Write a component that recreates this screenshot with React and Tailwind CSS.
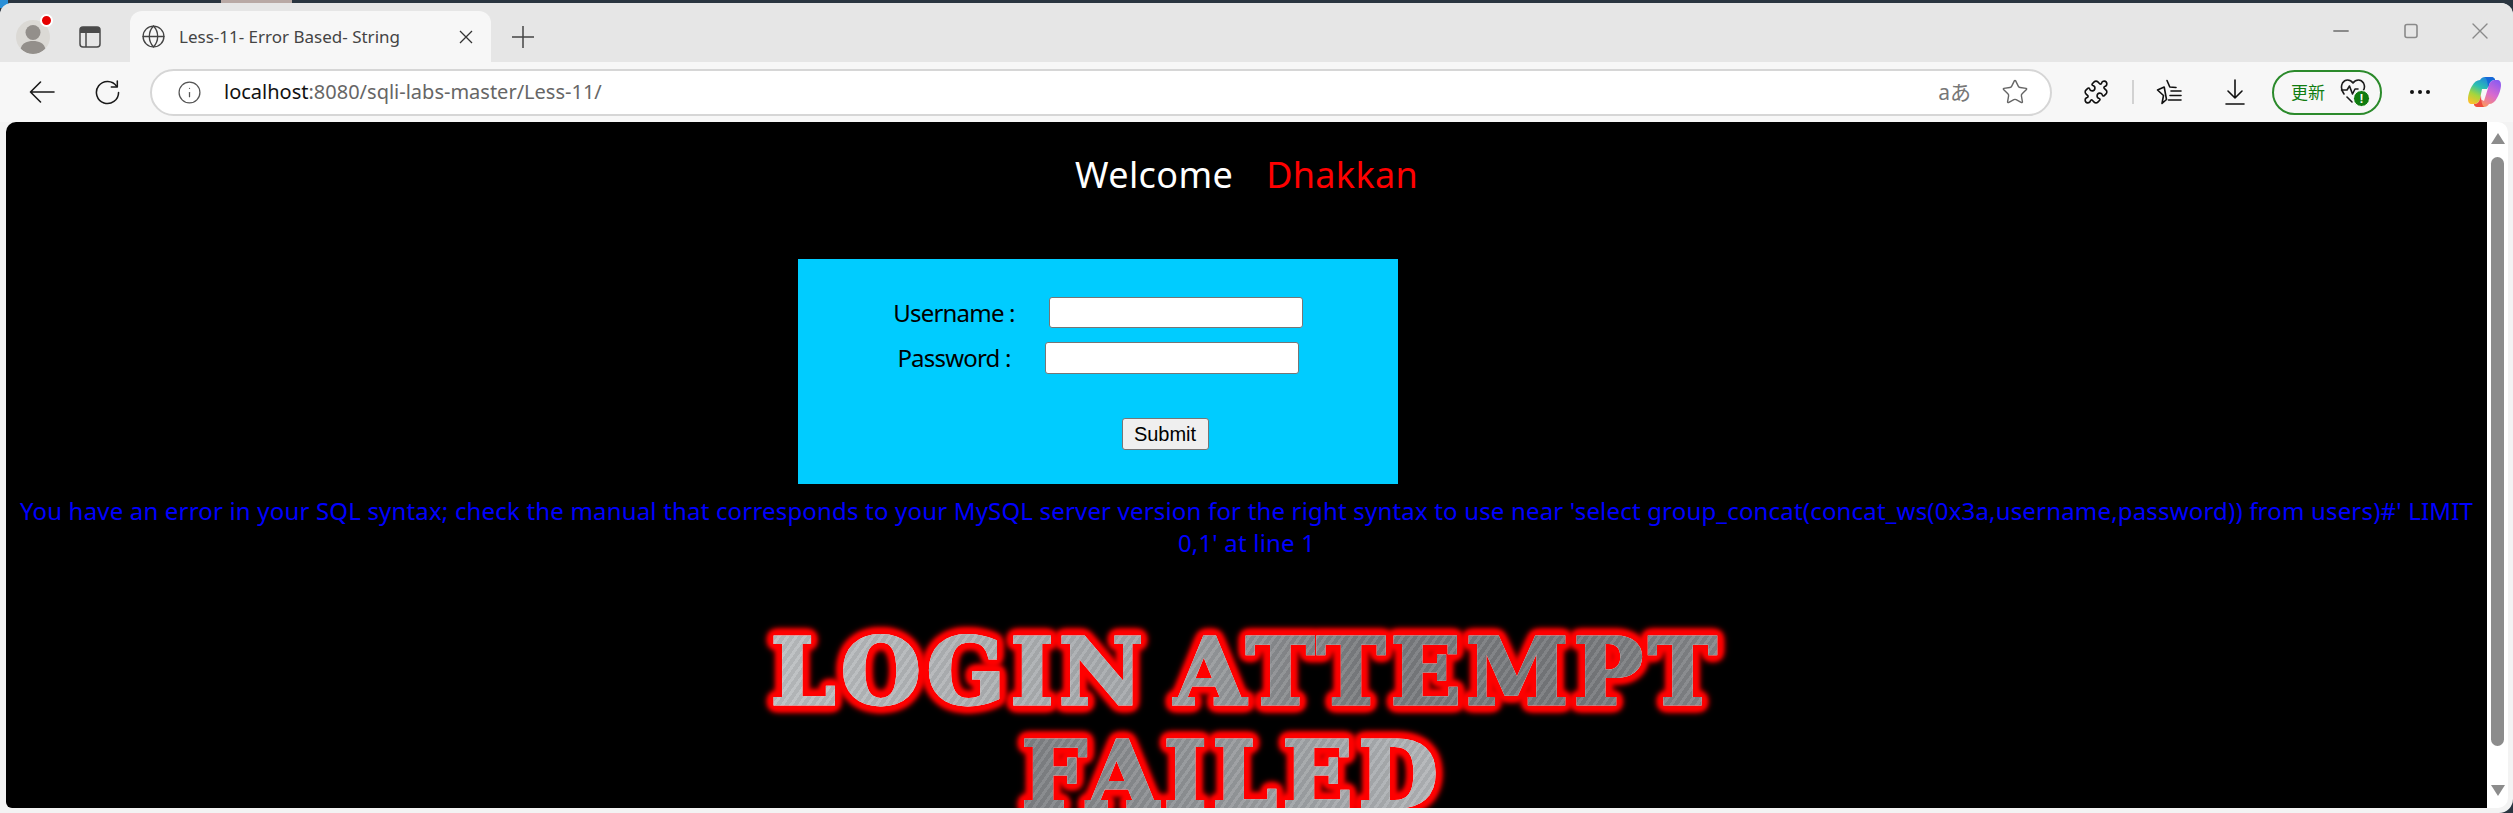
import React from "react";
import { Globe, Star, Info, Puzzle } from "lucide-react";

const ui = "font-['Noto_Sans','Open_Sans','Noto_Sans_CJK_SC',sans-serif]";

function Avatar() {
  return (
    <div className="relative w-[34px] h-[34px]">
      <div className="w-[34px] h-[34px] rounded-full bg-[#dbd9d5] overflow-hidden">
        <svg viewBox="0 0 34 34" className="w-[34px] h-[34px]">
          <circle cx="17" cy="12.5" r="7.5" fill="#938f8b" />
          <path d="M4.5 29 C6 23 11 21 17 21 C23 21 28 23 29.5 29 C26 32 22 34 17 34 C12 34 8 32 4.5 29Z" fill="#938f8b" />
        </svg>
      </div>
      <div className="absolute left-[24px] top-[-6px] w-[13px] h-[13px] rounded-full bg-[#e60000] border-2 border-white" />
    </div>
  );
}

function Sidebar() {
  return (
    <svg viewBox="0 0 22 22" className="w-[22px] h-[22px]" fill="none">
      <rect x="1" y="1" width="20" height="20" rx="3" stroke="#4a4a4a" strokeWidth="1.5" />
      <path d="M1 5 a4 4 0 0 1 4 -4 h12 a4 4 0 0 1 4 4 v2 h-20z" fill="#4a4a4a" />
      <path d="M7 7 v14" stroke="#4a4a4a" strokeWidth="1.5" />
    </svg>
  );
}

function Back() {
  return (
    <svg viewBox="0 0 26 22" className="w-[26px] h-[22px]" fill="none" stroke="#1a1a1a" strokeWidth="1.6" strokeLinecap="round" strokeLinejoin="round">
      <path d="M25 11 H1.5 M11.5 1 L1.5 11 L11.5 21" />
    </svg>
  );
}

function Reload() {
  return (
    <svg viewBox="0 0 26 26" className="w-[25px] h-[25px]" fill="none" stroke="#1a1a1a" strokeWidth="1.6" strokeLinecap="round" strokeLinejoin="round">
      <path d="M22.5 6.5 A11.5 11.5 0 1 0 24.5 13" />
      <path d="M23.2 1 V7.2 H17" />
    </svg>
  );
}

function FavList() {
  return (
    <svg viewBox="0 0 26 26" className="w-[26px] h-[26px]" fill="none" stroke="#111" strokeWidth="1.6" strokeLinejoin="round" strokeLinecap="round">
      <path d="M11 1.5 L13.8 8 L20 8.5 M10.5 20.5 L6 24.5 L7.5 16.5 L1.5 11 L8.2 8 Z" />
      <path d="M15 12 H25 M14 16.5 H25 M12.5 21 H25" />
    </svg>
  );
}

function Download() {
  return (
    <svg viewBox="0 0 20 26" className="w-[20px] h-[26px]" fill="none" stroke="#111" strokeWidth="1.6" strokeLinecap="round" strokeLinejoin="round">
      <path d="M10 1 V19 M3 12 L10 19 L17 12 M1 25 H19" />
    </svg>
  );
}

function Heart() {
  return (
    <div className="relative w-[28px] h-[30px]">
      <svg viewBox="0 0 26 26" className="w-[26px] h-[26px]" fill="none" stroke="#1c1c1c" strokeWidth="1.6" strokeLinecap="round" strokeLinejoin="round">
        <path d="M4 17 C1 13 1 9 2.5 6 C5 2 10 2 13 6 C16 2 21 2 23.5 6 C25 9 24.5 12 23 14" />
        <path d="M1.5 13 H7 L9.5 9 L12.5 17 L15 12 H18" />
        <path d="M7 20 L12 25" />
      </svg>
      <div className="absolute left-[13px] top-[13px] w-[17px] h-[17px] rounded-full bg-[#107c10] border border-white flex items-center justify-center text-white text-[12px] font-bold leading-none font-['Liberation_Sans',sans-serif]">!</div>
    </div>
  );
}

function Copilot() {
  return (
    <svg viewBox="0 0 33 30" className="w-[33px] h-[30px]">
      <defs>
        <linearGradient id="cpa" x1="0.7" y1="0" x2="0.2" y2="1">
          <stop offset="0" stopColor="#1f7fe0" />
          <stop offset="0.4" stopColor="#2cc0b0" />
          <stop offset="0.7" stopColor="#a5d63c" />
          <stop offset="1" stopColor="#fbc02d" />
        </linearGradient>
        <linearGradient id="cpb" x1="0.8" y1="0" x2="0.2" y2="1">
          <stop offset="0" stopColor="#8d5cf0" />
          <stop offset="0.45" stopColor="#d86ad0" />
          <stop offset="0.8" stopColor="#f58a7a" />
          <stop offset="1" stopColor="#f8a14a" />
        </linearGradient>
      </defs>
      <path d="M12 3 C13 1 15 0 17 0 H23 C26 0 27 2 27 3 C24 3 22 4 21 8 L19 12 L14 12 L12 22 C11 26 8 27 6 27 H4 C1 27 0 25 0 22 C0 18 2 12 4 9 C6 5 9 3 12 3Z" fill="url(#cpa)" />
      <path d="M17 0 H23 C26 0 27 2 27 3 C24 3 22 4 21 8 L20 12 C20 6 19 2 17 0Z" fill="#1668d8" />
      <path d="M21 27 C20 29 18 30 16 30 H10 C7 30 6 28 6 27 C9 27 11 26 12 22 L16 24 L21 8 C22 4 25 3 27 3 H29 C32 3 33 5 33 8 C33 12 31 18 29 21 C27 25 24 27 21 27Z" fill="url(#cpb)" />
      <path d="M16 30 H10 C7 30 6 28 6 27 C9 27 11 26 12 22 L13 18 C13 24 14 28 16 30Z" fill="#ee4b3e" />
    </svg>
  );
}

function Caption({ kind }) {
  return (
    <svg viewBox="0 0 16 16" className="w-[16px] h-[16px]" fill="none" stroke="#8a8a8a" strokeWidth="1.4" strokeLinecap="round">
      {kind === "min" && <path d="M1 8 H15" strokeWidth="1.8" />}
      {kind === "max" && <rect x="2" y="1.5" width="12" height="13" rx="2" strokeWidth="1.6" />}
      {kind === "close" && <path d="M1 1 L15 15 M15 1 L1 15" />}
    </svg>
  );
}

function TabStrip() {
  return (
    <div className="h-[59px] shrink-0 bg-[#e6e6e6] flex items-end">
      <div className="w-[16px]" />
      <div className="self-center mt-[8px]"><Avatar /></div>
      <div className="ml-[29px] w-[22px] self-center mt-[8px]"><Sidebar /></div>
      <div className="ml-[29px] w-[361px] h-[51px] bg-[#f7f7f7] rounded-t-[12px] flex items-center">
        <Globe size={25} strokeWidth={1.3} color="#444" className="ml-[11px]" />
        <span className="ml-[13px] text-[17px] text-[#444] whitespace-nowrap w-[270px]">Less-11- Error Based- String</span>
        <svg viewBox="0 0 14 14" className="w-[14px] h-[14px] ml-[10px]" fill="none" stroke="#333" strokeWidth="1.3"><path d="M1 1 L13 13 M13 1 L1 13" /></svg>
      </div>
      <div className="self-center mt-[8px] ml-[21px]">
        <svg viewBox="0 0 22 22" className="w-[22px] h-[22px]" fill="none" stroke="#444" strokeWidth="1.5"><path d="M11 0 V22 M0 11 H22" /></svg>
      </div>
      <div className="flex-1" />
      <div className="self-center mt-[-3px] flex items-center">
        <Caption kind="min" />
        <div className="ml-[54px]"><Caption kind="max" /></div>
        <div className="ml-[53px] mr-[25px]"><Caption kind="close" /></div>
      </div>
    </div>
  );
}

function Toolbar() {
  return (
    <div className="h-[60px] shrink-0 bg-[#f7f7f7] flex items-center">
      <div className="ml-[29px]"><Back /></div>
      <div className="ml-[40px]"><Reload /></div>
      <div className="ml-[30px] w-[1902px] h-[47px] bg-white rounded-full border-2 border-[#d6d6d6] flex items-center">
        <Info size={25} strokeWidth={1.2} color="#555" className="ml-[25px]" />
        <div className="ml-[22px] text-[20px] whitespace-nowrap flex-1">
          <span className="text-[#111]">localhost</span><span className="text-[#666]">:8080/sqli-labs-master/Less-11/</span>
        </div>
        <span className="text-[21px] text-[#777] leading-none">aあ</span>
        <Star size={28} strokeWidth={1.2} color="#666" className="ml-[30px] mr-[21px]" />
      </div>
      <div className="ml-[31px]"><Puzzle size={26} strokeWidth={1.5} color="#111" /></div>
      <div className="ml-[23px] w-[2px] h-[24px] bg-[#d2d2d2]" />
      <div className="ml-[22px]"><FavList /></div>
      <div className="ml-[43px]"><Download /></div>
      <div className="ml-[27px] w-[110px] h-[45px] rounded-full border-2 border-[#2b8a2b] flex items-center">
        <span className="ml-[17px] text-[17px] text-[#107c10] whitespace-nowrap leading-none">更新</span>
        <div className="ml-[15px]"><Heart /></div>
      </div>
      <div className="ml-[28px] flex gap-[4px]">
        <div className="w-[4px] h-[4px] rounded-full bg-[#111]" />
        <div className="w-[4px] h-[4px] rounded-full bg-[#111]" />
        <div className="w-[4px] h-[4px] rounded-full bg-[#111]" />
      </div>
      <div className="ml-[38px]"><Copilot /></div>
    </div>
  );
}

function Scrollbar() {
  return (
    <div className="w-[21px] shrink-0 bg-white flex flex-col items-center pt-[11px] rounded-tr-[10px] rounded-br-[10px]">
      <div className="w-0 h-0 border-l-[7px] border-r-[7px] border-b-[11px] border-l-transparent border-r-transparent border-b-[#8c8c8c]" />
      <div className="mt-[13px] w-[13px] h-[589px] rounded-full bg-[#8c8c8c]" />
      <div className="mt-[39px] w-0 h-0 border-l-[7px] border-r-[7px] border-t-[11px] border-l-transparent border-r-transparent border-t-[#8c8c8c]" />
    </div>
  );
}

function Page() {
  return (
    <div className="flex-1 h-full bg-black rounded-tl-[10px] rounded-bl-[6px] overflow-hidden flex flex-col items-center font-['Noto_Sans','Open_Sans',sans-serif]">
      <div className="shrink-0 mt-[28px] h-[50px] flex items-center text-[36px] leading-[50px] whitespace-nowrap">
        <span className="text-white tracking-[0.4px]">Welcome</span>
        <span className="ml-[33px] text-[#ff0000] tracking-[0.3px]">Dhakkan</span>
      </div>
      <form className="shrink-0 self-start ml-[792px] mt-[59px] w-[600px] h-[225px] bg-[#00ccff] flex flex-col items-center pt-[38px]">
        <div className="h-[31px] flex items-center text-[24px] tracking-[-0.8px] text-black">
          <label className="whitespace-nowrap">Username :</label>
          <input className="ml-[34px] w-[254px] h-[31px] bg-white border border-[#767676] rounded-[3px]" />
        </div>
        <div className="mt-[14px] h-[32px] flex items-center text-[24px] tracking-[-0.8px] text-black">
          <label className="whitespace-nowrap">Password :</label>
          <input className="ml-[34px] w-[254px] h-[32px] bg-white border border-[#767676] rounded-[3px]" />
        </div>
        <div className="mt-[44px] w-full flex justify-center pl-[134px]">
          <button type="button" className="w-[87px] h-[32px] bg-[#efefef] border border-[#767676] rounded-[3px] text-[20px] tracking-normal leading-none text-black font-['Liberation_Sans',sans-serif]">Submit</button>
        </div>
      </form>
      <div className="shrink-0 mt-[11px] w-full px-[8px] text-center text-[24px] tracking-[0.18px] leading-[32px] text-[#0000ff]">
        You have an error in your SQL syntax; check the manual that corresponds to your MySQL server version for the right syntax to use near 'select group_concat(concat_ws(0x3a,username,password)) from users)#' LIMIT 0,1' at line 1
      </div>
      <div className="shrink-0 mt-[62px] w-full flex flex-col items-center font-['DejaVu_Serif',serif] font-bold text-[92px] tracking-[5.5px] [word-spacing:-12px] leading-[103px] whitespace-nowrap">
        <div className="bg-clip-text text-transparent [-webkit-text-stroke:3px_transparent] [background-image:repeating-linear-gradient(125deg,rgba(255,255,255,0.08)_0px,rgba(255,255,255,0.08)_3px,rgba(0,0,0,0.05)_3px,rgba(0,0,0,0.05)_7px),linear-gradient(90deg,#bcbfc1_0%,#a6a9ac_38%,#7b7d80_62%,#77797c_85%,#85878a_100%)] [filter:drop-shadow(0_0_0.6px_#ffffff)_drop-shadow(0_0_2px_#ff0000)_drop-shadow(0_0_2px_#ff0000)_drop-shadow(0_0_2px_#ff0000)_drop-shadow(0_0_2px_#ff0000)_drop-shadow(0_0_2px_#ff0000)_drop-shadow(0_0_2px_#ff0000)]">LOGIN ATTEMPT</div>
        <div className="mr-[28px] bg-clip-text text-transparent [-webkit-text-stroke:3px_transparent] [background-image:repeating-linear-gradient(125deg,rgba(255,255,255,0.08)_0px,rgba(255,255,255,0.08)_3px,rgba(0,0,0,0.05)_3px,rgba(0,0,0,0.05)_7px),linear-gradient(90deg,#7f8184_0%,#94979a_45%,#b4b7ba_100%)] [filter:drop-shadow(0_0_0.6px_#ffffff)_drop-shadow(0_0_2px_#ff0000)_drop-shadow(0_0_2px_#ff0000)_drop-shadow(0_0_2px_#ff0000)_drop-shadow(0_0_2px_#ff0000)_drop-shadow(0_0_2px_#ff0000)_drop-shadow(0_0_2px_#ff0000)]">FAILED</div>
      </div>
    </div>
  );
}

export default function App() {
  return (
    <div className={`relative w-[2513px] h-[813px] bg-[#2a3540] overflow-hidden ${ui}`}>
      <div className="absolute left-0 top-0 w-[8px] h-[8px] bg-[#2b8fd6]" />
      <div className="absolute left-[221px] top-0 w-[71px] h-[3px] bg-[#b9a9a5]" />
      <div className="relative mt-[3px] h-[810px] bg-[#f3f3f3] rounded-t-[12px] rounded-br-[14px] overflow-hidden flex flex-col">
        <TabStrip />
        <Toolbar />
        <div className="h-[686px] ml-[6px] mr-[5px] flex">
          <Page />
          <Scrollbar />
        </div>
      </div>
    </div>
  );
}
